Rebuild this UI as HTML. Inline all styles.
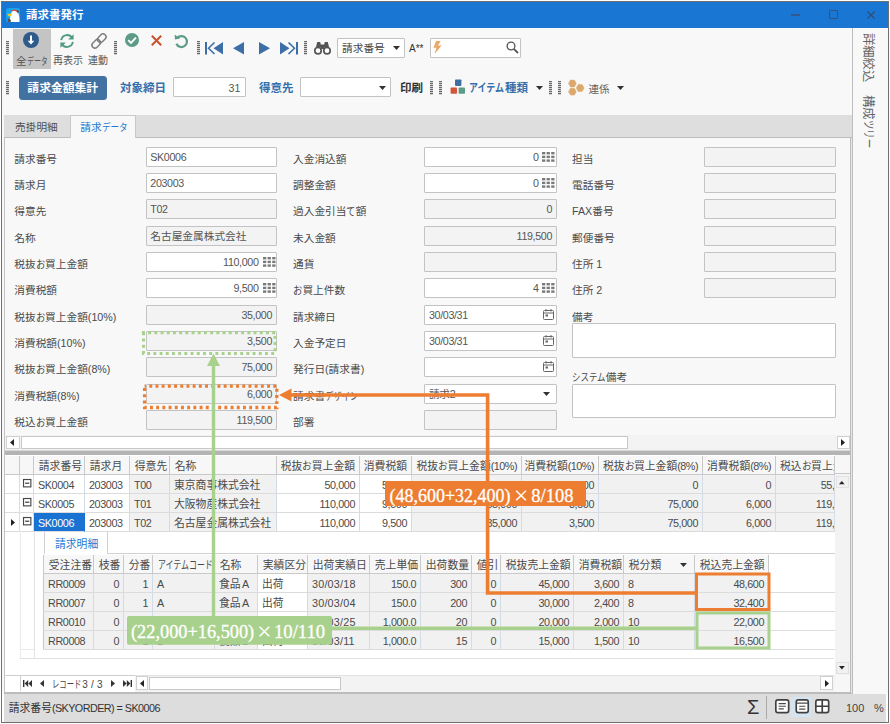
<!DOCTYPE html>
<html lang="ja"><head><meta charset="utf-8"><title>請求書発行</title>
<style>
html,body{margin:0;padding:0;background:#fff;}
body{width:890px;height:724px;overflow:hidden;position:relative;font-family:"Liberation Sans","Noto Sans CJK JP",sans-serif;font-size:10.7px;color:#4a4a4a;}
div{position:absolute;box-sizing:border-box;}
.t{white-space:nowrap;line-height:14px;height:14px;}
.b{font-weight:bold;}
.fld{border:1px solid #c3c3c3;background:#fff;border-radius:1px;}
.ro{background:#f3f3f3;}
.v{white-space:nowrap;line-height:14px;height:14px;color:#555;letter-spacing:-0.35px;}
.r{text-align:right;}
svg{position:absolute;overflow:visible;}
.hd{background:#f7f7f7;border-right:1px solid #c9c9c9;border-bottom:1px solid #c9c9c9;white-space:nowrap;overflow:hidden;line-height:20px;padding-left:4.8px;color:#4a4a4a;font-size:10.8px;}
.c{background:#f1f1f1;border-right:1px solid #d3dbe6;border-bottom:1px solid #dcdcdc;white-space:nowrap;overflow:hidden;line-height:20px;padding:0 4px;color:#4a4a4a;font-size:10.8px;letter-spacing:-0.4px;}
.j{letter-spacing:0;}
.w{background:#fff;}
</style></head>
<body>
<div style="left:1px;top:1px;width:888px;height:722px;border:1px solid #707070;background:#f8f8f8;"></div>
<div style="left:2px;top:2px;width:886px;height:25.6px;background:#1a76d3;"></div>
<svg style="left:6px;top:8px" width="14" height="14" viewBox="0 0 14 14"><rect width="14" height="14" rx="2.5" fill="#19a5ee"/><path d="M4 14 C4 7 5 2.5 8.5 2.5 C12 2.5 13.5 6 13.5 14Z" fill="#fff"/><path d="M5 3.5 C7 1 10 1 12.5 3.2 L11.5 4.5 C9 2.5 7 3 5 3.5Z" fill="#e0504a"/><path d="M10.5 2.2 L13 3 L12 5.5Z" fill="#444"/><path d="M1 6 L5.5 5.5 L5.5 8 L3 8.5Z" fill="#ffc81e"/><path d="M1.5 10 L5 12 L4.5 14 L2 14Z" fill="#555"/></svg>
<div class="t" style="left:26px;top:7.5px;color:#fff;font-weight:bold;font-size:11.5px;">請求書発行</div>
<div style="left:791px;top:14.1px;width:8.6px;height:1.5px;background:#34598c;"></div>
<div style="left:828.8px;top:10.2px;width:9px;height:8.6px;border:1.4px solid #34547e;border-radius:1px;"></div>
<svg style="left:867px;top:10.5px" width="8" height="8" viewBox="0 0 8 8"><path d="M0.4 0.4 L7.6 7.6 M7.6 0.4 L0.4 7.6" stroke="#30507c" stroke-width="1.4" fill="none"/></svg>
<div style="left:852px;top:27.5px;width:1px;height:666px;background:#bdbdbd;"></div>
<div style="left:886px;top:694px;width:2px;height:28px;background:#fff;"></div>
<div class="t" style="left:875.3px;top:33.3px;transform-origin:0 0;transform:rotate(90deg);font-size:12.3px;color:#646464;line-height:15px;height:15px;">詳細絞込</div>
<div class="t" style="left:875.3px;top:94.5px;transform-origin:0 0;transform:rotate(90deg);font-size:12.3px;color:#646464;line-height:15px;height:15px;">構成<span style="display:inline-block;width:28.0px;white-space:nowrap;"><span style="display:inline-block;transform-origin:0 50%;transform:scaleX(0.76);">ツリー</span></span></div>
<div style="left:6px;top:41px;width:3px;height:14px;background:repeating-linear-gradient(to bottom,#6a6a6a 0,#6a6a6a 1px,#d0d0d0 1px,#d0d0d0 2px);"></div>
<div style="left:13px;top:28.5px;width:37.5px;height:40px;background:#c4c4c4;"></div>
<svg style="left:23px;top:32px" width="16" height="16" viewBox="0 0 16 16"><circle cx="8" cy="8" r="8" fill="#2f5b8c"/><path d="M7 3.5h2v5.2h2.3L8 12.4 4.7 8.7H7z" fill="#fff"/></svg>
<div class="t" style="left:16px;top:54px;font-size:10.5px;color:#565656;">全<span style="display:inline-block;width:20.8px;white-space:nowrap;"><span style="display:inline-block;transform-origin:0 50%;transform:scaleX(0.66);">データ</span></span></div>
<svg style="left:59px;top:33px" width="16" height="16" viewBox="0 0 16 16"><path d="M2.2 7.2 A6 6 0 0 1 12.6 4" stroke="#4e9b80" stroke-width="1.9" fill="none"/><path d="M14.6 1.2 V6.6 H9.2 Z" fill="#4e9b80"/><path d="M13.8 8.8 A6 6 0 0 1 3.4 12" stroke="#4e9b80" stroke-width="1.9" fill="none"/><path d="M1.4 14.8 V9.4 H6.8 Z" fill="#4e9b80"/></svg>
<div class="t" style="left:53px;top:54px;font-size:10px;color:#565656;">再表示</div>
<svg style="left:90px;top:31.5px" width="18" height="18" viewBox="0 0 17 17"><g fill="none" stroke="#7c7c7c" stroke-width="1.35" transform="rotate(-45 8.5 8.5)"><rect x="0.3" y="5.7" width="9" height="5.6" rx="2.8"/><rect x="7.7" y="5.7" width="9" height="5.6" rx="2.8"/></g></svg>
<div class="t" style="left:88px;top:54px;font-size:10px;color:#565656;">連動</div>
<div style="left:114px;top:41px;width:3px;height:14px;background:repeating-linear-gradient(to bottom,#6a6a6a 0,#6a6a6a 1px,#d0d0d0 1px,#d0d0d0 2px);"></div>
<svg style="left:125px;top:33px" width="14" height="14" viewBox="0 0 14 14"><circle cx="7" cy="7" r="7" fill="#5c9b85"/><path d="M3.2 7.2 L6 10 L11 4.6" stroke="#fff" stroke-width="1.9" fill="none"/></svg>
<svg style="left:151px;top:35px" width="11" height="11" viewBox="0 0 11 11"><path d="M0.8 0.8 L10.2 10.2 M10.2 0.8 L0.8 10.2" stroke="#c9522f" stroke-width="2" fill="none"/></svg>
<svg style="left:174px;top:33px" width="15" height="15" viewBox="0 0 15 15"><path d="M3.2 5 A5.5 5.5 0 1 1 2.4 10.8" stroke="#5c9b85" stroke-width="2.2" fill="none"/><path d="M0.6 1.4 L1 6.6 L6 5.4 Z" fill="#5c9b85"/></svg>
<div style="left:197px;top:41px;width:3px;height:14px;background:repeating-linear-gradient(to bottom,#6a6a6a 0,#6a6a6a 1px,#d0d0d0 1px,#d0d0d0 2px);"></div>
<svg style="left:205px;top:41.5px" width="18" height="12.5" preserveAspectRatio="none" viewBox="0 0 18 13.5"><rect x="0" y="0" width="2" height="13.5" fill="#3d6fa6"/><path d="M9.5 0.5 L3.5 6.75 L9.5 13" stroke="#3d6fa6" stroke-width="1.6" fill="none"/><path d="M18 0 V13.5 L8.5 6.75Z" fill="#3d6fa6"/></svg>
<svg style="left:233px;top:41.5px" width="11" height="12.5" preserveAspectRatio="none" viewBox="0 0 11 13.5"><path d="M11 0 V13.5 L0 6.75Z" fill="#3d6fa6"/></svg>
<svg style="left:259px;top:41.5px" width="11" height="12.5" preserveAspectRatio="none" viewBox="0 0 11 13.5"><path d="M0 0 V13.5 L11 6.75Z" fill="#3d6fa6"/></svg>
<svg style="left:280px;top:41.5px" width="18" height="12.5" preserveAspectRatio="none" viewBox="0 0 18 13.5"><rect x="16" y="0" width="2" height="13.5" fill="#3d6fa6"/><path d="M8.5 0.5 L14.5 6.75 L8.5 13" stroke="#3d6fa6" stroke-width="1.6" fill="none"/><path d="M0 0 V13.5 L9.5 6.75Z" fill="#3d6fa6"/></svg>
<div style="left:304px;top:41px;width:3px;height:14px;background:repeating-linear-gradient(to bottom,#6a6a6a 0,#6a6a6a 1px,#d0d0d0 1px,#d0d0d0 2px);"></div>
<svg style="left:314px;top:41px" width="17" height="14" viewBox="0 0 17 14"><path d="M3.2 1 h3 l0.6 2.5 h3.4 l0.6-2.5 h3 l1.2 5 h-13z" fill="#555"/><rect x="6.3" y="4" width="4.4" height="4" fill="#555"/><circle cx="4" cy="9.7" r="3.2" fill="#fff" stroke="#555" stroke-width="1.7"/><circle cx="13" cy="9.7" r="3.2" fill="#fff" stroke="#555" stroke-width="1.7"/></svg>
<div class="fld" style="left:337px;top:38px;width:67.5px;height:19.5px;"></div>
<div class="t" style="left:342px;top:41px;color:#444;">請求番号</div>
<svg style="left:393px;top:46px" width="7" height="4" viewBox="0 0 7 4"><path d="M0 0H7L3.5 4Z" fill="#333"/></svg>
<div class="t" style="left:409px;top:42px;font-size:10px;color:#333;">A**</div>
<div class="fld" style="left:430px;top:38px;width:91px;height:19.5px;"></div>
<svg style="left:433px;top:41px" width="9" height="13" viewBox="0 0 9 13"><path d="M3.2 0 H7.6 L5 4.6 H8.6 L1.6 13 L3.4 6.8 H0.4 Z" fill="#e9a867"/></svg>
<svg style="left:506px;top:41px" width="13" height="13" viewBox="0 0 13 13"><circle cx="5" cy="5" r="3.9" fill="none" stroke="#555" stroke-width="1.3"/><path d="M7.8 7.8 L12 12" stroke="#555" stroke-width="1.8"/></svg>
<div style="left:6px;top:80.5px;width:3px;height:14px;background:repeating-linear-gradient(to bottom,#6a6a6a 0,#6a6a6a 1px,#d0d0d0 1px,#d0d0d0 2px);"></div>
<div style="left:18.5px;top:75.6px;width:88.7px;height:24.5px;background:#4272a2;border-radius:3.5px;"></div>
<div class="t" style="left:18.5px;top:80.7px;width:88.5px;text-align:center;color:#fff;font-weight:bold;font-size:11.8px;">請求金額集計</div>
<div class="t" style="left:120px;top:81px;color:#356fac;font-weight:bold;font-size:11.5px;">対象締日</div>
<div class="fld" style="left:173px;top:77.3px;width:73px;height:19.7px;"></div>
<div class="t" style="left:173.5px;top:81px;width:67px;text-align:right;color:#555;">31</div>
<div class="t" style="left:259px;top:81px;color:#356fac;font-weight:bold;font-size:11.5px;">得意先</div>
<div class="fld" style="left:299.8px;top:77.3px;width:91px;height:19.7px;"></div>
<svg style="left:378.5px;top:86px" width="7" height="4" viewBox="0 0 7 4"><path d="M0 0H7L3.5 4Z" fill="#333"/></svg>
<div class="t" style="left:400px;top:81px;color:#333;font-weight:bold;font-size:11.5px;">印刷</div>
<div style="left:430.3px;top:80.5px;width:3px;height:14px;background:repeating-linear-gradient(to bottom,#6a6a6a 0,#6a6a6a 1px,#d0d0d0 1px,#d0d0d0 2px);"></div>
<div style="left:439px;top:80.5px;width:3px;height:14px;background:repeating-linear-gradient(to bottom,#6a6a6a 0,#6a6a6a 1px,#d0d0d0 1px,#d0d0d0 2px);"></div>
<svg style="left:450px;top:79px" width="16" height="16" viewBox="0 0 16 16"><rect x="5" y="0.5" width="6.4" height="6.4" rx="0.8" fill="#3f6ea3"/><rect x="0.6" y="8.4" width="6.4" height="6.4" rx="0.8" fill="#d2553a"/><rect x="8.6" y="8.4" width="6.4" height="6.4" rx="0.8" fill="#5c9b85"/></svg>
<div class="t" style="left:469px;top:81px;color:#356fac;font-weight:bold;font-size:11.5px;"><span style="display:inline-block;width:35.9px;white-space:nowrap;"><span style="display:inline-block;transform-origin:0 50%;transform:scaleX(0.78);">アイテム</span></span>種類</div>
<svg style="left:536px;top:86px" width="7" height="4" viewBox="0 0 7 4"><path d="M0 0H7L3.5 4Z" fill="#333"/></svg>
<div style="left:549.3px;top:80.5px;width:3px;height:14px;background:repeating-linear-gradient(to bottom,#6a6a6a 0,#6a6a6a 1px,#d0d0d0 1px,#d0d0d0 2px);"></div>
<div style="left:558px;top:80.5px;width:3px;height:14px;background:repeating-linear-gradient(to bottom,#6a6a6a 0,#6a6a6a 1px,#d0d0d0 1px,#d0d0d0 2px);"></div>
<svg style="left:567px;top:79px" width="18" height="17" viewBox="0 0 18 17"><g fill="#dca96d" stroke="#dca96d" stroke-width="0.5" stroke-linejoin="round"><polygon points="9.3,4.5 7.4,7.9 3.5,7.9 1.5,4.5 3.4,1.1 7.4,1.1"/><polygon points="17.1,9.0 15.2,12.4 11.2,12.4 9.3,9.0 11.2,5.6 15.2,5.6"/><polygon points="9.3,12.7 7.4,16.1 3.5,16.1 1.5,12.7 3.4,9.3 7.4,9.3"/></g></svg>
<div class="t" style="left:588.5px;top:81.5px;color:#606060;font-size:10.6px;">連係</div>
<svg style="left:616.5px;top:86.3px" width="7" height="4" viewBox="0 0 7 4"><path d="M0 0H7L3.5 4Z" fill="#333"/></svg>
<div style="left:4px;top:115px;width:848px;height:22.5px;background:#dedede;border-bottom:1px solid #bdbdbd;"></div>
<div style="left:4px;top:137.5px;width:848px;height:555.5px;background:#f8f8f8;border:1px solid #c4c4c4;border-top:none;"></div>
<div style="left:69.5px;top:115px;width:66px;height:23px;background:#f8f8f8;border:1px solid #c8c8c8;border-bottom:none;"></div>
<div class="t" style="left:15px;top:119.7px;color:#505050;">売掛明細</div>
<div class="t" style="left:80.3px;top:119.7px;color:#1e7ad2;">請求<span style="display:inline-block;width:25.7px;white-space:nowrap;"><span style="display:inline-block;transform-origin:0 50%;transform:scaleX(0.8);">データ</span></span></div>
<div class="t" style="left:14.3px;top:152px;">請求番号</div>
<div class="fld" style="left:146px;top:147px;width:130.5px;height:19.5px;"></div>
<div class="v" style="left:150.3px;top:150px;color:#555;">SK0006</div>
<div class="t" style="left:14.3px;top:178px;">請求月</div>
<div class="fld" style="left:146px;top:173px;width:130.5px;height:19.5px;"></div>
<div class="v" style="left:150.3px;top:176px;color:#555;">203003</div>
<div class="t" style="left:14.3px;top:204px;">得意先</div>
<div class="fld ro" style="left:146px;top:199px;width:130.5px;height:19.5px;"></div>
<div class="v" style="left:150.3px;top:202px;color:#555;">T02</div>
<div class="t" style="left:14.3px;top:231px;">名称</div>
<div class="fld ro" style="left:146px;top:226px;width:130.5px;height:19.5px;"></div>
<div class="v" style="left:150.3px;top:229px;color:#555;letter-spacing:0;">名古屋金属株式会社</div>
<div class="t" style="left:14.3px;top:257px;">税抜<span style="display:inline-block;width:9.4px;white-space:nowrap;"><span style="display:inline-block;transform-origin:0 50%;transform:scaleX(0.88);">お</span></span>買上金額</div>
<div class="fld" style="left:146px;top:252px;width:130.5px;height:19.5px;"></div>
<div class="v" style="left:146px;top:255px;width:112.5px;text-align:right;">110,000</div>
<svg style="left:262.7px;top:256.7px" width="13" height="10" viewBox="0 0 13 10"><g fill="#7a7a7a"><rect x="0.0" y="0.0" width="3.3" height="2.4"/><rect x="4.6" y="0.0" width="3.3" height="2.4"/><rect x="9.2" y="0.0" width="3.3" height="2.4"/><rect x="0.0" y="3.7" width="3.3" height="2.4"/><rect x="4.6" y="3.7" width="3.3" height="2.4"/><rect x="9.2" y="3.7" width="3.3" height="2.4"/><rect x="0.0" y="7.4" width="3.3" height="2.4"/><rect x="4.6" y="7.4" width="3.3" height="2.4"/><rect x="9.2" y="7.4" width="3.3" height="2.4"/></g></svg>
<div class="t" style="left:14.3px;top:283px;">消費税額</div>
<div class="fld" style="left:146px;top:278px;width:130.5px;height:19.5px;"></div>
<div class="v" style="left:146px;top:281px;width:112.5px;text-align:right;">9,500</div>
<svg style="left:262.7px;top:282.7px" width="13" height="10" viewBox="0 0 13 10"><g fill="#7a7a7a"><rect x="0.0" y="0.0" width="3.3" height="2.4"/><rect x="4.6" y="0.0" width="3.3" height="2.4"/><rect x="9.2" y="0.0" width="3.3" height="2.4"/><rect x="0.0" y="3.7" width="3.3" height="2.4"/><rect x="4.6" y="3.7" width="3.3" height="2.4"/><rect x="9.2" y="3.7" width="3.3" height="2.4"/><rect x="0.0" y="7.4" width="3.3" height="2.4"/><rect x="4.6" y="7.4" width="3.3" height="2.4"/><rect x="9.2" y="7.4" width="3.3" height="2.4"/></g></svg>
<div class="t" style="left:14.3px;top:310px;">税抜<span style="display:inline-block;width:9.4px;white-space:nowrap;"><span style="display:inline-block;transform-origin:0 50%;transform:scaleX(0.88);">お</span></span>買上金額(10%)</div>
<div class="fld ro" style="left:146px;top:305px;width:130.5px;height:19.5px;"></div>
<div class="v" style="left:146px;top:308px;width:126px;text-align:right;">35,000</div>
<div class="t" style="left:14.3px;top:336px;">消費税額(10%)</div>
<div class="fld ro" style="left:146px;top:331px;width:130.5px;height:19.5px;"></div>
<div class="v" style="left:146px;top:334px;width:126px;text-align:right;">3,500</div>
<div class="t" style="left:14.3px;top:362px;">税抜<span style="display:inline-block;width:9.4px;white-space:nowrap;"><span style="display:inline-block;transform-origin:0 50%;transform:scaleX(0.88);">お</span></span>買上金額(8%)</div>
<div class="fld ro" style="left:146px;top:357px;width:130.5px;height:19.5px;"></div>
<div class="v" style="left:146px;top:360px;width:126px;text-align:right;">75,000</div>
<div class="t" style="left:14.3px;top:389px;">消費税額(8%)</div>
<div class="fld ro" style="left:146px;top:384px;width:130.5px;height:19.5px;"></div>
<div class="v" style="left:146px;top:387px;width:126px;text-align:right;">6,000</div>
<div class="t" style="left:14.3px;top:415px;">税込<span style="display:inline-block;width:9.4px;white-space:nowrap;"><span style="display:inline-block;transform-origin:0 50%;transform:scaleX(0.88);">お</span></span>買上金額</div>
<div class="fld ro" style="left:146px;top:410px;width:130.5px;height:19.5px;"></div>
<div class="v" style="left:146px;top:413px;width:126px;text-align:right;">119,500</div>
<div class="t" style="left:293px;top:152px;">入金消込額</div>
<div class="fld" style="left:424px;top:147px;width:132.5px;height:19.5px;"></div>
<div class="v" style="left:424px;top:150px;width:114.5px;text-align:right;">0</div>
<svg style="left:542.2px;top:151.7px" width="13" height="10" viewBox="0 0 13 10"><g fill="#7a7a7a"><rect x="0.0" y="0.0" width="3.3" height="2.4"/><rect x="4.6" y="0.0" width="3.3" height="2.4"/><rect x="9.2" y="0.0" width="3.3" height="2.4"/><rect x="0.0" y="3.7" width="3.3" height="2.4"/><rect x="4.6" y="3.7" width="3.3" height="2.4"/><rect x="9.2" y="3.7" width="3.3" height="2.4"/><rect x="0.0" y="7.4" width="3.3" height="2.4"/><rect x="4.6" y="7.4" width="3.3" height="2.4"/><rect x="9.2" y="7.4" width="3.3" height="2.4"/></g></svg>
<div class="t" style="left:293px;top:178px;">調整金額</div>
<div class="fld" style="left:424px;top:173px;width:132.5px;height:19.5px;"></div>
<div class="v" style="left:424px;top:176px;width:114.5px;text-align:right;">0</div>
<svg style="left:542.2px;top:177.7px" width="13" height="10" viewBox="0 0 13 10"><g fill="#7a7a7a"><rect x="0.0" y="0.0" width="3.3" height="2.4"/><rect x="4.6" y="0.0" width="3.3" height="2.4"/><rect x="9.2" y="0.0" width="3.3" height="2.4"/><rect x="0.0" y="3.7" width="3.3" height="2.4"/><rect x="4.6" y="3.7" width="3.3" height="2.4"/><rect x="9.2" y="3.7" width="3.3" height="2.4"/><rect x="0.0" y="7.4" width="3.3" height="2.4"/><rect x="4.6" y="7.4" width="3.3" height="2.4"/><rect x="9.2" y="7.4" width="3.3" height="2.4"/></g></svg>
<div class="t" style="left:293px;top:204px;">過入金引当<span style="display:inline-block;width:9.4px;white-space:nowrap;"><span style="display:inline-block;transform-origin:0 50%;transform:scaleX(0.88);">て</span></span>額</div>
<div class="fld ro" style="left:424px;top:199px;width:132.5px;height:19.5px;"></div>
<div class="v" style="left:424px;top:202px;width:128px;text-align:right;">0</div>
<div class="t" style="left:293px;top:231px;">未入金額</div>
<div class="fld ro" style="left:424px;top:226px;width:132.5px;height:19.5px;"></div>
<div class="v" style="left:424px;top:229px;width:128px;text-align:right;">119,500</div>
<div class="t" style="left:293px;top:257px;">通貨</div>
<div class="fld ro" style="left:424px;top:252px;width:132.5px;height:19.5px;"></div>
<div class="v" style="left:424px;top:255px;width:128px;text-align:right;"></div>
<div class="t" style="left:293px;top:283px;"><span style="display:inline-block;width:9.4px;white-space:nowrap;"><span style="display:inline-block;transform-origin:0 50%;transform:scaleX(0.88);">お</span></span>買上件数</div>
<div class="fld" style="left:424px;top:278px;width:132.5px;height:19.5px;"></div>
<div class="v" style="left:424px;top:281px;width:114.5px;text-align:right;">4</div>
<svg style="left:542.2px;top:282.7px" width="13" height="10" viewBox="0 0 13 10"><g fill="#7a7a7a"><rect x="0.0" y="0.0" width="3.3" height="2.4"/><rect x="4.6" y="0.0" width="3.3" height="2.4"/><rect x="9.2" y="0.0" width="3.3" height="2.4"/><rect x="0.0" y="3.7" width="3.3" height="2.4"/><rect x="4.6" y="3.7" width="3.3" height="2.4"/><rect x="9.2" y="3.7" width="3.3" height="2.4"/><rect x="0.0" y="7.4" width="3.3" height="2.4"/><rect x="4.6" y="7.4" width="3.3" height="2.4"/><rect x="9.2" y="7.4" width="3.3" height="2.4"/></g></svg>
<div class="t" style="left:293px;top:310px;">請求締日</div>
<div class="fld" style="left:424px;top:305px;width:132.5px;height:19.5px;"></div>
<div class="v" style="left:429px;top:308px;">30/03/31</div>
<svg style="left:543px;top:309px" width="11" height="11" viewBox="0 0 11 11"><rect x="0.5" y="1.5" width="10" height="9" rx="1" fill="#fff" stroke="#666" stroke-width="1"/><path d="M0.5 4H10.5" stroke="#666" stroke-width="1"/><path d="M3 0V2.5M8 0V2.5" stroke="#666" stroke-width="1"/><rect x="2.5" y="5.5" width="2.5" height="2" fill="#666"/></svg>
<div class="t" style="left:293px;top:336px;">入金予定日</div>
<div class="fld" style="left:424px;top:331px;width:132.5px;height:19.5px;"></div>
<div class="v" style="left:429px;top:334px;">30/03/31</div>
<svg style="left:543px;top:335px" width="11" height="11" viewBox="0 0 11 11"><rect x="0.5" y="1.5" width="10" height="9" rx="1" fill="#fff" stroke="#666" stroke-width="1"/><path d="M0.5 4H10.5" stroke="#666" stroke-width="1"/><path d="M3 0V2.5M8 0V2.5" stroke="#666" stroke-width="1"/><rect x="2.5" y="5.5" width="2.5" height="2" fill="#666"/></svg>
<div class="t" style="left:293px;top:362px;">発行日(請求書)</div>
<div class="fld" style="left:424px;top:357px;width:132.5px;height:19.5px;"></div>
<div class="v" style="left:429px;top:360px;"></div>
<svg style="left:543px;top:361px" width="11" height="11" viewBox="0 0 11 11"><rect x="0.5" y="1.5" width="10" height="9" rx="1" fill="#fff" stroke="#666" stroke-width="1"/><path d="M0.5 4H10.5" stroke="#666" stroke-width="1"/><path d="M3 0V2.5M8 0V2.5" stroke="#666" stroke-width="1"/><rect x="2.5" y="5.5" width="2.5" height="2" fill="#666"/></svg>
<div class="t" style="left:293px;top:389px;">請求書<span style="display:inline-block;width:33.4px;white-space:nowrap;"><span style="display:inline-block;transform-origin:0 50%;transform:scaleX(0.78);">デザイン</span></span></div>
<div class="fld" style="left:424px;top:384px;width:132.5px;height:19.5px;"></div>
<div class="v" style="left:429px;top:387px;">請求2</div>
<svg style="left:543px;top:392px" width="7" height="4" viewBox="0 0 7 4"><path d="M0 0H7L3.5 4Z" fill="#333"/></svg>
<div class="t" style="left:293px;top:415px;">部署</div>
<div class="fld ro" style="left:424px;top:410px;width:132.5px;height:19.5px;"></div>
<div class="v" style="left:424px;top:413px;width:128px;text-align:right;"></div>
<div class="t" style="left:572px;top:152px;">担当</div>
<div class="fld ro" style="left:704px;top:147px;width:132px;height:19.5px;"></div>
<div class="t" style="left:572px;top:178px;">電話番号</div>
<div class="fld ro" style="left:704px;top:173px;width:132px;height:19.5px;"></div>
<div class="t" style="left:572px;top:204px;">FAX番号</div>
<div class="fld ro" style="left:704px;top:199px;width:132px;height:19.5px;"></div>
<div class="t" style="left:572px;top:231px;">郵便番号</div>
<div class="fld ro" style="left:704px;top:226px;width:132px;height:19.5px;"></div>
<div class="t" style="left:572px;top:257px;">住所 1</div>
<div class="fld ro" style="left:704px;top:252px;width:132px;height:19.5px;"></div>
<div class="t" style="left:572px;top:283px;">住所 2</div>
<div class="fld ro" style="left:704px;top:278px;width:132px;height:19.5px;"></div>
<div class="t" style="left:572px;top:310px;">備考</div>
<div class="fld" style="left:572px;top:323px;width:263.5px;height:34.5px;"></div>
<div class="t" style="left:572px;top:370px;"><span style="display:inline-block;width:33.8px;white-space:nowrap;"><span style="display:inline-block;transform-origin:0 50%;transform:scaleX(0.79);">システム</span></span>備考</div>
<div class="fld" style="left:572px;top:383.5px;width:263.5px;height:34px;"></div>
<div style="left:5px;top:435px;width:846px;height:14.5px;background:#f3f3f3;"></div>
<div style="left:5.5px;top:435.5px;width:14px;height:13.5px;background:#fff;border:1px solid #d0d0d0;"></div>
<svg style="left:10px;top:438.5px" width="4" height="7" viewBox="0 0 4 7"><path d="M4 0V7L0 3.5Z" fill="#222"/></svg>
<div style="left:21px;top:435.5px;width:606.5px;height:13.5px;background:#fff;border:1px solid #c8c8c8;"></div>
<div style="left:836.5px;top:435.5px;width:13px;height:13.5px;background:#fff;border:1px solid #d0d0d0;"></div>
<svg style="left:841px;top:438.5px" width="4" height="7" viewBox="0 0 4 7"><path d="M0 0V7L4 3.5Z" fill="#222"/></svg>
<div style="left:5px;top:449.5px;width:846px;height:5px;background:#b4b4b4;border-top:1px solid #d8d8d8;"></div>
<div style="left:5px;top:454.5px;width:846px;height:237px;background:#fff;"></div>
<div class="hd" style="left:5px;top:455.5px;width:15px;height:19px;"></div>
<div class="hd" style="left:20px;top:455.5px;width:14px;height:19px;"></div>
<div class="hd" style="left:34px;top:455.5px;width:51px;height:19px;">請求番号</div>
<div class="hd" style="left:85px;top:455.5px;width:45px;height:19px;">請求月</div>
<div class="hd" style="left:130px;top:455.5px;width:40px;height:19px;">得意先</div>
<div class="hd" style="left:170px;top:455.5px;width:107px;height:19px;">名称</div>
<div class="hd" style="left:277px;top:455.5px;width:83px;height:19px;text-align:right;padding-right:4px;padding-left:0;">税抜<span style="display:inline-block;width:9.5px;white-space:nowrap;"><span style="display:inline-block;transform-origin:0 50%;transform:scaleX(0.88);">お</span></span>買上金額</div>
<div class="hd" style="left:360px;top:455.5px;width:52px;height:19px;text-align:right;padding-right:4px;padding-left:0;">消費税額</div>
<div class="hd" style="left:412px;top:455.5px;width:110px;height:19px;text-align:right;padding-right:4px;padding-left:0;">税抜<span style="display:inline-block;width:9.5px;white-space:nowrap;"><span style="display:inline-block;transform-origin:0 50%;transform:scaleX(0.88);">お</span></span>買上金額<span style="letter-spacing:-0.5px">(10%)</span></div>
<div class="hd" style="left:522px;top:455.5px;width:77px;height:19px;text-align:right;padding-right:4px;padding-left:0;">消費税額<span style="letter-spacing:-0.5px">(10%)</span></div>
<div class="hd" style="left:599px;top:455.5px;width:104px;height:19px;text-align:right;padding-right:4px;padding-left:0;">税抜<span style="display:inline-block;width:9.5px;white-space:nowrap;"><span style="display:inline-block;transform-origin:0 50%;transform:scaleX(0.88);">お</span></span>買上金額<span style="letter-spacing:-0.5px">(8%)</span></div>
<div class="hd" style="left:703px;top:455.5px;width:73px;height:19px;text-align:right;padding-right:4px;padding-left:0;">消費税額<span style="letter-spacing:-0.5px">(8%)</span></div>
<div class="hd" style="left:776px;top:455.5px;width:58.5px;height:19px;padding-left:4px;">税込<span style="display:inline-block;width:9.5px;white-space:nowrap;"><span style="display:inline-block;transform-origin:0 50%;transform:scaleX(0.88);">お</span></span>買上金額</div>
<div style="left:5px;top:474.5px;width:15px;height:19px;border-right:1px solid #dcdcdc;border-bottom:1px solid #dcdcdc;background:#fff;"></div>
<div style="left:20px;top:474.5px;width:14px;height:19px;border-right:1px solid #dcdcdc;border-bottom:1px solid #dcdcdc;background:#fff;"></div>
<svg style="left:23.2px;top:479.1px" width="8.4" height="8.4" viewBox="0 0 8 8"><rect x="0.5" y="0.5" width="7" height="7" fill="#fff" stroke="#484848" stroke-width="1.1"/><path d="M2 4H6" stroke="#333" stroke-width="1.1"/></svg>
<div class="c w" style="left:34px;top:474.5px;width:51px;height:19px;">SK0004</div>
<div class="c w" style="left:85px;top:474.5px;width:45px;height:19px;">203003</div>
<div class="c" style="left:130px;top:474.5px;width:40px;height:19px;">T00</div>
<div class="c j" style="left:170px;top:474.5px;width:107px;height:19px;">東京商事株式会社</div>
<div class="c w" style="left:277px;top:474.5px;width:83px;height:19px;text-align:right;">50,000</div>
<div class="c w" style="left:360px;top:474.5px;width:52px;height:19px;text-align:right;">5,000</div>
<div class="c" style="left:412px;top:474.5px;width:110px;height:19px;text-align:right;">50,000</div>
<div class="c" style="left:522px;top:474.5px;width:77px;height:19px;text-align:right;">5,000</div>
<div class="c" style="left:599px;top:474.5px;width:104px;height:19px;text-align:right;">0</div>
<div class="c" style="left:703px;top:474.5px;width:73px;height:19px;text-align:right;">0</div>
<div class="c" style="left:776px;top:474.5px;width:58.5px;height:19px;text-align:left;padding-left:4px;padding-right:0;"><span style="display:block;width:71.3px;text-align:right">55,000</span></div>
<div style="left:5px;top:493.5px;width:15px;height:19px;border-right:1px solid #dcdcdc;border-bottom:1px solid #dcdcdc;background:#fff;"></div>
<div style="left:20px;top:493.5px;width:14px;height:19px;border-right:1px solid #dcdcdc;border-bottom:1px solid #dcdcdc;background:#fff;"></div>
<svg style="left:23.2px;top:498.1px" width="8.4" height="8.4" viewBox="0 0 8 8"><rect x="0.5" y="0.5" width="7" height="7" fill="#fff" stroke="#484848" stroke-width="1.1"/><path d="M2 4H6" stroke="#333" stroke-width="1.1"/></svg>
<div class="c w" style="left:34px;top:493.5px;width:51px;height:19px;">SK0005</div>
<div class="c w" style="left:85px;top:493.5px;width:45px;height:19px;">203003</div>
<div class="c" style="left:130px;top:493.5px;width:40px;height:19px;">T01</div>
<div class="c j" style="left:170px;top:493.5px;width:107px;height:19px;">大阪物産株式会社</div>
<div class="c w" style="left:277px;top:493.5px;width:83px;height:19px;text-align:right;">110,000</div>
<div class="c w" style="left:360px;top:493.5px;width:52px;height:19px;text-align:right;">9,500</div>
<div class="c" style="left:412px;top:493.5px;width:110px;height:19px;text-align:right;">35,000</div>
<div class="c" style="left:522px;top:493.5px;width:77px;height:19px;text-align:right;">3,500</div>
<div class="c" style="left:599px;top:493.5px;width:104px;height:19px;text-align:right;">75,000</div>
<div class="c" style="left:703px;top:493.5px;width:73px;height:19px;text-align:right;">6,000</div>
<div class="c" style="left:776px;top:493.5px;width:58.5px;height:19px;text-align:left;padding-left:4px;padding-right:0;"><span style="display:block;width:71.3px;text-align:right">119,500</span></div>
<div style="left:5px;top:512.5px;width:15px;height:19px;border-right:1px solid #dcdcdc;border-bottom:1px solid #dcdcdc;background:#fff;"></div>
<div style="left:20px;top:512.5px;width:14px;height:19px;border-right:1px solid #dcdcdc;border-bottom:1px solid #dcdcdc;background:#fff;"></div>
<svg style="left:23.2px;top:517.1px" width="8.4" height="8.4" viewBox="0 0 8 8"><rect x="0.5" y="0.5" width="7" height="7" fill="#fff" stroke="#484848" stroke-width="1.1"/><path d="M2 4H6" stroke="#333" stroke-width="1.1"/></svg>
<div class="c w" style="left:34px;top:512.5px;width:51px;height:19px;background:#1a73d2;color:#fff;border-right-color:#1a73d2;">SK0006</div>
<div class="c w" style="left:85px;top:512.5px;width:45px;height:19px;">203003</div>
<div class="c" style="left:130px;top:512.5px;width:40px;height:19px;">T02</div>
<div class="c j" style="left:170px;top:512.5px;width:107px;height:19px;">名古屋金属株式会社</div>
<div class="c w" style="left:277px;top:512.5px;width:83px;height:19px;text-align:right;">110,000</div>
<div class="c w" style="left:360px;top:512.5px;width:52px;height:19px;text-align:right;">9,500</div>
<div class="c" style="left:412px;top:512.5px;width:110px;height:19px;text-align:right;">35,000</div>
<div class="c" style="left:522px;top:512.5px;width:77px;height:19px;text-align:right;">3,500</div>
<div class="c" style="left:599px;top:512.5px;width:104px;height:19px;text-align:right;">75,000</div>
<div class="c" style="left:703px;top:512.5px;width:73px;height:19px;text-align:right;">6,000</div>
<div class="c" style="left:776px;top:512.5px;width:58.5px;height:19px;text-align:left;padding-left:4px;padding-right:0;"><span style="display:block;width:71.3px;text-align:right">119,500</span></div>
<svg style="left:11px;top:518.5px" width="4" height="7" viewBox="0 0 4 7"><path d="M0 0V7L4 3.5Z" fill="#222"/></svg>
<div style="left:834.5px;top:474px;width:16px;height:201px;background:#f3f3f3;"></div>
<div style="left:836px;top:475.5px;width:13px;height:12.5px;background:#f1f1f1;border:1px solid #e2e2e2;"></div>
<svg style="left:839.3px;top:480.6px" width="5.6" height="3.4" viewBox="0 0 7 4"><path d="M0 4H7L3.5 0Z" fill="#222"/></svg>
<div style="left:835.5px;top:661.5px;width:13px;height:12.4px;background:#f0f0f0;border:1px solid #e0e0e0;"></div>
<svg style="left:839.2px;top:666.2px" width="5.8" height="3.5" viewBox="0 0 7 4"><path d="M0 0H7L3.5 4Z" fill="#222"/></svg>
<div style="left:834.5px;top:455px;width:16px;height:19px;background:#f7f7f7;border-bottom:1px solid #c9c9c9;"></div>
<div style="left:19.5px;top:531px;width:1px;height:127px;background:#ebebeb;"></div>
<div style="left:34px;top:531px;width:1px;height:127px;background:#e2e2e2;"></div>
<div style="left:20px;top:657.5px;width:814px;height:1px;background:#e2e2e2;"></div>
<div style="left:20px;top:648.5px;width:14px;height:1px;background:#e8e8e8;"></div>
<div style="left:43.5px;top:553px;width:791px;height:1px;background:#d0d0d0;"></div>
<div style="left:43.5px;top:531.5px;width:64px;height:22.5px;background:#fff;border:1px solid #d0d0d0;border-bottom:none;border-top:none;"></div>
<div class="t" style="left:55px;top:536.5px;color:#1e7ad2;font-size:10.8px;">請求明細</div>
<div class="hd" style="left:43px;top:555px;width:51px;height:19px;border-left:1px solid #c9c9c9;">受注注番</div>
<div class="hd" style="left:94px;top:555px;width:30px;height:19px;">枝番</div>
<div class="hd" style="left:124px;top:555px;width:29px;height:19px;">分番</div>
<div class="hd" style="left:153px;top:555px;width:62px;height:19px;"><span style="display:inline-block;width:55.6px;white-space:nowrap;"><span style="display:inline-block;transform-origin:0 50%;transform:scaleX(0.735);">アイテムコード</span></span></div>
<div class="hd" style="left:215px;top:555px;width:43px;height:19px;">名称</div>
<div class="hd" style="left:258px;top:555px;width:50px;height:19px;">実績区分</div>
<div class="hd" style="left:308px;top:555px;width:62px;height:19px;">出荷実績日</div>
<div class="hd" style="left:370px;top:555px;width:51px;height:19px;">売上単価</div>
<div class="hd" style="left:421px;top:555px;width:51px;height:19px;">出荷数量</div>
<div class="hd" style="left:472px;top:555px;width:29px;height:19px;">値引</div>
<div class="hd" style="left:501px;top:555px;width:73px;height:19px;">税抜売上金額</div>
<div class="hd" style="left:574px;top:555px;width:50px;height:19px;">消費税額</div>
<div class="hd" style="left:624px;top:555px;width:71px;height:19px;">税分類</div>
<div class="hd" style="left:695px;top:555px;width:74px;height:19px;">税込売上金額</div>
<svg style="left:680px;top:563px" width="7" height="4" viewBox="0 0 7 4"><path d="M0 0H7L3.5 4Z" fill="#333"/></svg>
<div style="left:769px;top:574px;width:65.5px;height:19px;border-bottom:1px solid #dcdcdc;background:#fff;"></div>
<div class="c" style="left:43px;top:574px;width:51px;height:19px;border-left:1px solid #c9c9c9;">RR0009</div>
<div class="c" style="left:94px;top:574px;width:30px;height:19px;text-align:right;">0</div>
<div class="c" style="left:124px;top:574px;width:29px;height:19px;text-align:right;">1</div>
<div class="c" style="left:153px;top:574px;width:62px;height:19px;">A</div>
<div class="c j" style="left:215px;top:574px;width:43px;height:19px;word-spacing:-1.5px;">食品 A</div>
<div class="c w j" style="left:258px;top:574px;width:50px;height:19px;word-spacing:-1.5px;">出荷</div>
<div class="c" style="left:308px;top:574px;width:62px;height:19px;letter-spacing:0.2px;">30/03/18</div>
<div class="c" style="left:370px;top:574px;width:51px;height:19px;text-align:right;">150.0</div>
<div class="c" style="left:421px;top:574px;width:51px;height:19px;text-align:right;">300</div>
<div class="c" style="left:472px;top:574px;width:29px;height:19px;text-align:right;">0</div>
<div class="c" style="left:501px;top:574px;width:73px;height:19px;text-align:right;">45,000</div>
<div class="c" style="left:574px;top:574px;width:50px;height:19px;text-align:right;">3,600</div>
<div class="c" style="left:624px;top:574px;width:71px;height:19px;">8</div>
<div class="c" style="left:695px;top:574px;width:74px;height:19px;text-align:right;">48,600</div>
<div style="left:769px;top:593px;width:65.5px;height:19px;border-bottom:1px solid #dcdcdc;background:#fff;"></div>
<div class="c" style="left:43px;top:593px;width:51px;height:19px;border-left:1px solid #c9c9c9;">RR0007</div>
<div class="c" style="left:94px;top:593px;width:30px;height:19px;text-align:right;">0</div>
<div class="c" style="left:124px;top:593px;width:29px;height:19px;text-align:right;">1</div>
<div class="c" style="left:153px;top:593px;width:62px;height:19px;">A</div>
<div class="c j" style="left:215px;top:593px;width:43px;height:19px;word-spacing:-1.5px;">食品 A</div>
<div class="c w j" style="left:258px;top:593px;width:50px;height:19px;word-spacing:-1.5px;">出荷</div>
<div class="c" style="left:308px;top:593px;width:62px;height:19px;letter-spacing:0.2px;">30/03/04</div>
<div class="c" style="left:370px;top:593px;width:51px;height:19px;text-align:right;">150.0</div>
<div class="c" style="left:421px;top:593px;width:51px;height:19px;text-align:right;">200</div>
<div class="c" style="left:472px;top:593px;width:29px;height:19px;text-align:right;">0</div>
<div class="c" style="left:501px;top:593px;width:73px;height:19px;text-align:right;">30,000</div>
<div class="c" style="left:574px;top:593px;width:50px;height:19px;text-align:right;">2,400</div>
<div class="c" style="left:624px;top:593px;width:71px;height:19px;">8</div>
<div class="c" style="left:695px;top:593px;width:74px;height:19px;text-align:right;">32,400</div>
<div style="left:769px;top:612px;width:65.5px;height:19px;border-bottom:1px solid #dcdcdc;background:#fff;"></div>
<div class="c" style="left:43px;top:612px;width:51px;height:19px;border-left:1px solid #c9c9c9;">RR0010</div>
<div class="c" style="left:94px;top:612px;width:30px;height:19px;text-align:right;">0</div>
<div class="c" style="left:124px;top:612px;width:29px;height:19px;text-align:right;">1</div>
<div class="c" style="left:153px;top:612px;width:62px;height:19px;">B</div>
<div class="c j" style="left:215px;top:612px;width:43px;height:19px;word-spacing:-1.5px;">食品 B</div>
<div class="c w j" style="left:258px;top:612px;width:50px;height:19px;word-spacing:-1.5px;">出荷</div>
<div class="c" style="left:308px;top:612px;width:62px;height:19px;letter-spacing:0.2px;">30/03/25</div>
<div class="c" style="left:370px;top:612px;width:51px;height:19px;text-align:right;">1,000.0</div>
<div class="c" style="left:421px;top:612px;width:51px;height:19px;text-align:right;">20</div>
<div class="c" style="left:472px;top:612px;width:29px;height:19px;text-align:right;">0</div>
<div class="c" style="left:501px;top:612px;width:73px;height:19px;text-align:right;">20,000</div>
<div class="c" style="left:574px;top:612px;width:50px;height:19px;text-align:right;">2,000</div>
<div class="c" style="left:624px;top:612px;width:71px;height:19px;">10</div>
<div class="c" style="left:695px;top:612px;width:74px;height:19px;text-align:right;">22,000</div>
<div style="left:769px;top:631px;width:65.5px;height:19px;border-bottom:1px solid #dcdcdc;background:#fff;"></div>
<div class="c" style="left:43px;top:631px;width:51px;height:19px;border-left:1px solid #c9c9c9;">RR0008</div>
<div class="c" style="left:94px;top:631px;width:30px;height:19px;text-align:right;">0</div>
<div class="c" style="left:124px;top:631px;width:29px;height:19px;text-align:right;">1</div>
<div class="c" style="left:153px;top:631px;width:62px;height:19px;">B</div>
<div class="c j" style="left:215px;top:631px;width:43px;height:19px;word-spacing:-1.5px;">食品 B</div>
<div class="c w j" style="left:258px;top:631px;width:50px;height:19px;word-spacing:-1.5px;">出荷</div>
<div class="c" style="left:308px;top:631px;width:62px;height:19px;letter-spacing:0.2px;">30/03/11</div>
<div class="c" style="left:370px;top:631px;width:51px;height:19px;text-align:right;">1,000.0</div>
<div class="c" style="left:421px;top:631px;width:51px;height:19px;text-align:right;">15</div>
<div class="c" style="left:472px;top:631px;width:29px;height:19px;text-align:right;">0</div>
<div class="c" style="left:501px;top:631px;width:73px;height:19px;text-align:right;">15,000</div>
<div class="c" style="left:574px;top:631px;width:50px;height:19px;text-align:right;">1,500</div>
<div class="c" style="left:624px;top:631px;width:71px;height:19px;">10</div>
<div class="c" style="left:695px;top:631px;width:74px;height:19px;text-align:right;">16,500</div>
<div style="left:5px;top:675px;width:829.5px;height:1px;background:#e2e2e2;"></div>
<div style="left:5px;top:675px;width:129.5px;height:1px;background:#cdcdcd;"></div>
<div style="left:5px;top:676px;width:129.5px;height:15px;background:#fff;"></div>
<div style="left:19.5px;top:676px;width:1px;height:15px;background:#cfcfcf;"></div>
<div style="left:134.5px;top:676px;width:716px;height:15.5px;background:#f3f3f3;"></div>
<svg style="left:23px;top:680px" width="9" height="7" viewBox="0 0 9 7"><rect x="0" y="0" width="1.4" height="7" fill="#333"/><path d="M5.2 0V7L1.6 3.5Z M9 0V7L5.4 3.5Z" fill="#333"/></svg>
<svg style="left:39.5px;top:680px" width="4" height="7" viewBox="0 0 4 7"><path d="M4 0V7L0 3.5Z" fill="#333"/></svg>
<div class="t" style="left:52px;top:676.5px;font-size:10.5px;color:#444;"><span style="display:inline-block;width:29.4px;white-space:nowrap;"><span style="display:inline-block;transform-origin:0 50%;transform:scaleX(0.7);">レコード</span></span><span style="font-size:10px;letter-spacing:-0.3px;word-spacing:1px;margin-left:-2.5px"> 3 / 3</span></div>
<svg style="left:111px;top:680px" width="4" height="7" viewBox="0 0 4 7"><path d="M0 0V7L4 3.5Z" fill="#333"/></svg>
<svg style="left:122.5px;top:680px" width="9" height="7" viewBox="0 0 9 7"><rect x="7.6" y="0" width="1.4" height="7" fill="#333"/><path d="M0 0V7L3.6 3.5Z M3.8 0V7L7.4 3.5Z" fill="#333"/></svg>
<div style="left:135.7px;top:676.3px;width:12.3px;height:13.5px;background:#fff;border:1px solid #d0d0d0;"></div>
<svg style="left:139.7px;top:679.7px" width="4" height="7" viewBox="0 0 4 7"><path d="M4 0V7L0 3.5Z" fill="#222"/></svg>
<div style="left:149.3px;top:676.5px;width:192.2px;height:13.3px;background:#fff;border:1px solid #c8c8c8;"></div>
<div style="left:820.2px;top:676.2px;width:12.8px;height:13.5px;background:#fff;border:1px solid #d0d0d0;"></div>
<svg style="left:825.2px;top:679.5px" width="4" height="7" viewBox="0 0 4 7"><path d="M0 0V7L4 3.5Z" fill="#222"/></svg>
<div style="left:834.5px;top:675px;width:16.5px;height:16.5px;background:#f7f7f7;"></div>
<div style="left:4px;top:691.5px;width:848px;height:2.5px;background:#c8c8c8;border-top:1px solid #bcbcbc;border-bottom:1px solid #bcbcbc;"></div>
<div style="left:850px;top:137.5px;width:2px;height:555px;background:#e6e6e6;border-left:1px solid #bcbcbc;"></div>
<div style="left:2px;top:694px;width:886px;height:28px;background:#fff;"></div>
<div style="left:4px;top:694px;width:882px;height:28px;background:#dddddd;"></div>
<div class="t" style="left:8.7px;top:701px;color:#333;font-size:10.8px;">請求番号<span style="letter-spacing:-0.55px">(SKYORDER) = SK0006</span></div>
<div class="t" style="left:747px;top:696px;font-size:20px;line-height:22px;height:22px;color:#333;">Σ</div>
<div style="left:765.5px;top:696px;width:1px;height:23px;background:#aaa;"></div>
<svg style="left:774.5px;top:699px" width="14.5" height="14.5" viewBox="0 0 14 14"><rect x="0.8" y="0.8" width="12.4" height="12.4" rx="2" fill="#fff" stroke="#404040" stroke-width="1.6"/><path d="M3.5 4.5H10.5M3.5 7H10.5M3.5 9.5H8.5" stroke="#4a4a4a" stroke-width="1.2"/></svg>
<div style="left:791.3px;top:697px;width:20px;height:19.5px;background:#d3e4f3;"></div>
<svg style="left:794.8px;top:699px" width="14.5" height="14.5" viewBox="0 0 14 14"><rect x="1.2" y="0.8" width="11.6" height="12.4" rx="2" fill="#fff" stroke="#404040" stroke-width="1.6"/><path d="M1.2 4H12.8" stroke="#4a4a4a" stroke-width="1.2"/><path d="M4 7H10M4 9.8H10" stroke="#4a4a4a" stroke-width="1.2"/></svg>
<svg style="left:814.8px;top:699px" width="14.5" height="14.5" viewBox="0 0 14 14"><rect x="0.8" y="0.8" width="12.4" height="12.4" rx="2" fill="#fff" stroke="#404040" stroke-width="1.6"/><path d="M7 0.8V13.2M0.8 7H13.2" stroke="#404040" stroke-width="1.6"/></svg>
<div class="t" style="left:846px;top:701px;color:#444;font-size:11px;">100</div>
<div class="t" style="left:874px;top:701px;color:#444;font-size:11px;">%</div>
<svg style="left:0;top:0" width="890" height="724" viewBox="0 0 890 724"><rect x="143.5" y="332.6" width="131.6" height="20.9" fill="none" stroke="#a9d18e" stroke-width="3.1" stroke-dasharray="2.9 3.3" stroke-dashoffset="1.5"/><rect x="144.6" y="386.1" width="132.2" height="21.4" fill="none" stroke="#ed7d31" stroke-width="3.3" stroke-dasharray="2.9 3.3" stroke-dashoffset="1.5"/><path d="M213.5 616V364" stroke="#a9d18e" stroke-width="3.4" fill="none"/><path d="M213.5 353.5L220 366H207Z" fill="#a9d18e"/><path d="M331 628.2H696" stroke="#a9d18e" stroke-width="3.6" fill="none"/><rect x="697" y="613" width="72" height="35" fill="none" stroke="#a9d18e" stroke-width="3"/><path d="M290 395H487.6V593H695" stroke="#ed7d31" stroke-width="3.6" fill="none"/><path d="M279 395L291.5 388.5V401.5Z" fill="#ed7d31"/><rect x="696.5" y="574" width="72.5" height="35.5" fill="none" stroke="#ed7d31" stroke-width="3"/><rect x="385" y="481" width="201" height="25" fill="#ed7d31"/><rect x="127" y="616" width="205" height="28.8" rx="2" fill="#a9d18e"/><text x="389.5" y="501.5" fill="#fff" font-family="'Liberation Serif',serif" font-size="18" stroke="#fff" stroke-width="0.3" textLength="121.0" lengthAdjust="spacingAndGlyphs">(48,600+32,400)</text><text x="521.2" y="503.7" fill="#fff" font-family="'Liberation Serif',serif" font-size="26" text-anchor="middle">×</text><text x="531.3" y="501.5" fill="#fff" font-family="'Liberation Serif',serif" font-size="18" stroke="#fff" stroke-width="0.3" textLength="42.30000000000007" lengthAdjust="spacingAndGlyphs">8/108</text><text x="131" y="638" fill="#fff" font-family="'Liberation Serif',serif" font-size="18" stroke="#fff" stroke-width="0.3" textLength="123.19999999999999" lengthAdjust="spacingAndGlyphs">(22,000+16,500)</text><text x="264.3" y="640.2" fill="#fff" font-family="'Liberation Serif',serif" font-size="26" text-anchor="middle">×</text><text x="274" y="638" fill="#fff" font-family="'Liberation Serif',serif" font-size="18" stroke="#fff" stroke-width="0.3" textLength="51.19999999999999" lengthAdjust="spacingAndGlyphs">10/110</text></svg>
</body></html>
